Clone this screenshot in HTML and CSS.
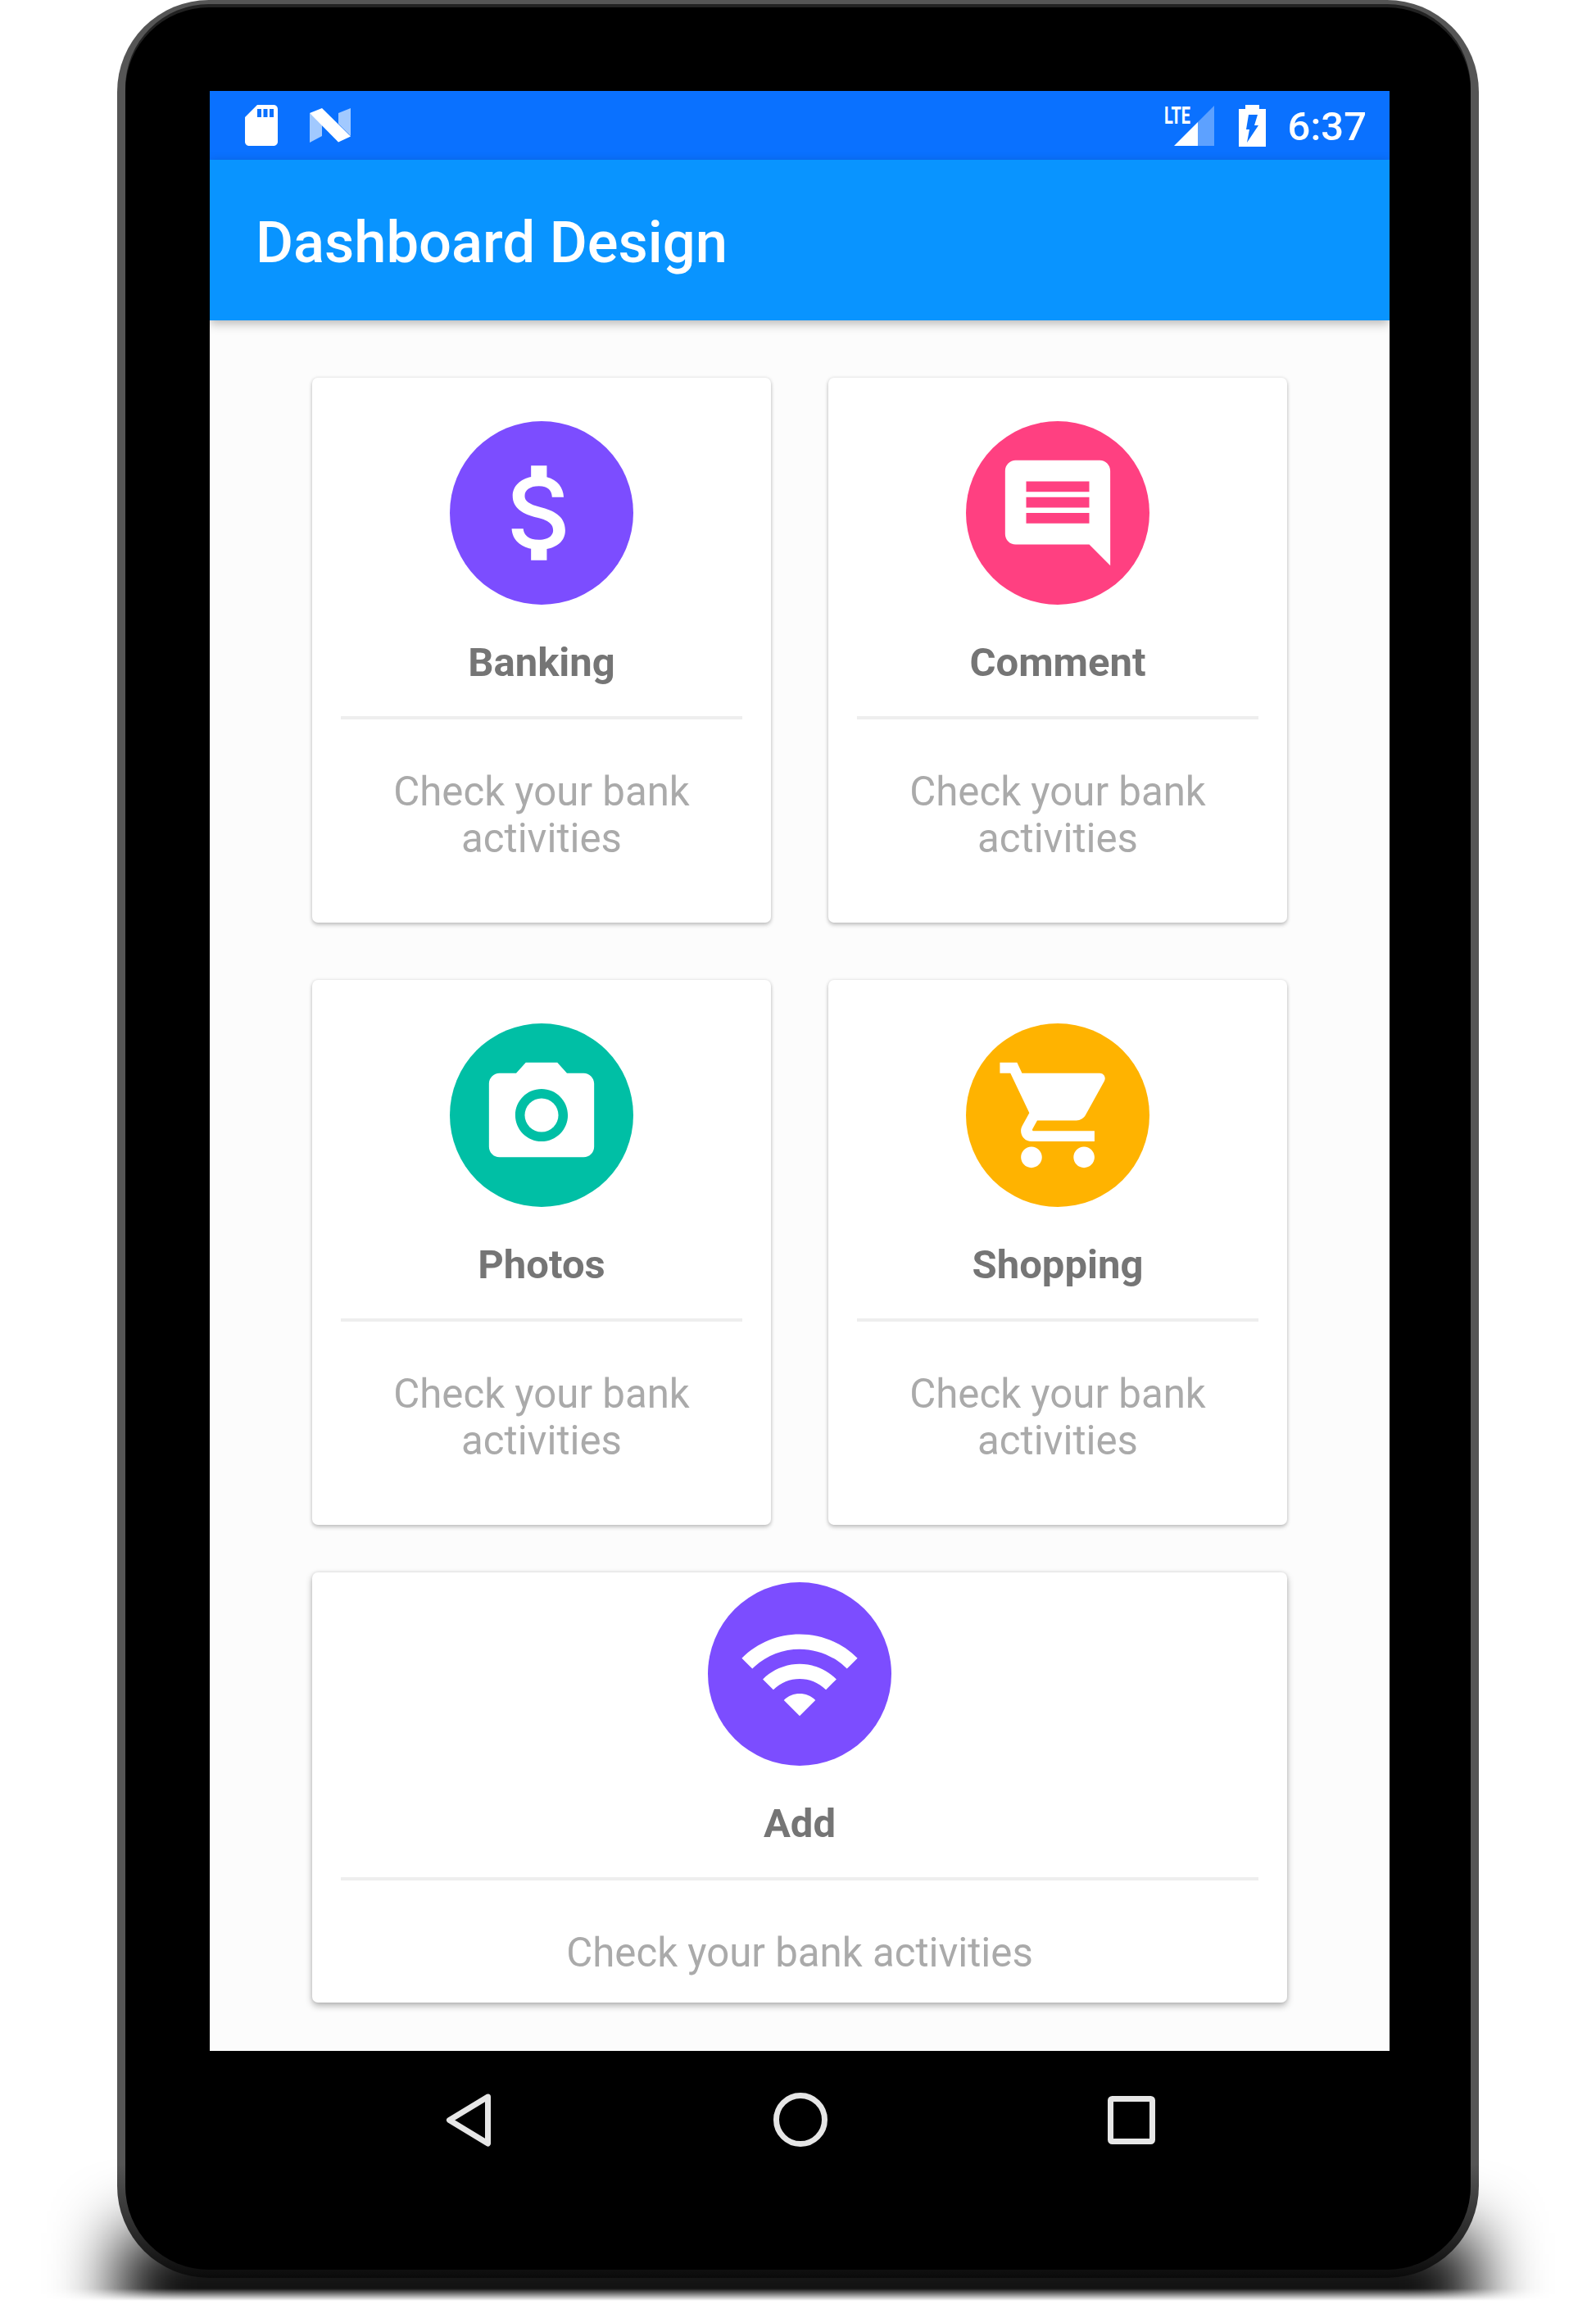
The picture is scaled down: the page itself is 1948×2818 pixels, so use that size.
FILE: index.html
```html
<!DOCTYPE html>
<html lang="en">
<head>
    <meta charset="UTF-8">
    <meta name="viewport" content="width=device-width, initial-scale=1.0">
    <title>Dashboard Design</title>
    <link rel="stylesheet" href="styles.css">
</head>
<body>
    <div class="device">
        <div class="bezel">
            <div class="screen">
                <!-- Status bar -->
                <div class="status-bar">
                    <svg class="sd-icon" viewBox="4 2 16 20"><path d="M18 2h-8L4.02 8 4 20c0 1.1.9 2 2 2h12c1.1 0 2-.9 2-2V4c0-1.1-.9-2-2-2zm-6 6h-2V4h2v4zm3 0h-2V4h2v4zm3 0h-2V4h2v4z"/></svg>
                    <svg class="n-icon" viewBox="0 0 50 42">
                        <polygon class="faded" points="0,6 15,18 15,34 0,42"/>
                        <polygon class="faded" points="35,6 50,0 50,34 35,19"/>
                        <polygon points="0,6 15,0 50,34.5 35,41.5"/>
                    </svg>
                    <svg class="signal-icon" viewBox="0 -8 61 57">
                        <text class="lte" x="0" y="22" textLength="32" lengthAdjust="spacingAndGlyphs">LTE</text>
                        <polygon points="12,49 41,49 41,20"/>
                        <polygon class="faded" points="41,20 61,0 61,49 41,49"/>
                    </svg>
                    <svg class="battery-icon" viewBox="0 0 33 51">
                        <polygon points="8,0 25,0 25,5 33,5 33,51 0,51 0,5 8,5"/>
                        <polygon class="bolt" points="12,12 23,12 19,25 24,25 10,46 13,30 9,30"/>
                    </svg>
                    <span class="time">6:37</span>
                </div>

                <div class="toolbar">
                    <h1>Dashboard Design</h1>
                </div>

                <!-- Dashboard cards -->
                <div class="content">
                    <div class="card">
                        <div class="circle purple">
                            <svg viewBox="0 0 24 24"><path d="M11.8 10.9c-2.27-.59-3-1.2-3-2.15 0-1.09 1.01-1.85 2.7-1.85 1.78 0 2.44.85 2.5 2.1h2.21c-.07-1.72-1.12-3.3-3.21-3.81V3h-3v2.16c-1.94.42-3.5 1.68-3.5 3.61 0 2.31 1.91 3.46 4.7 4.13 2.5.6 3 1.48 3 2.41 0 .69-.49 1.79-2.7 1.79-2.06 0-2.87-.92-2.98-2.1h-2.2c.12 2.19 1.76 3.42 3.68 3.83V21h3v-2.15c1.95-.37 3.5-1.5 3.5-3.55 0-2.84-2.43-3.81-4.7-4.4z"/></svg>
                        </div>
                        <h2>Banking</h2>
                        <div class="divider"></div>
                        <p>Check your bank activities</p>
                    </div>

                    <div class="card">
                        <div class="circle pink">
                            <svg viewBox="0 0 24 24"><path d="M21.99 4c0-1.1-.89-2-1.99-2H4c-1.1 0-2 .9-2 2v12c0 1.1.9 2 2 2h14l4 4-.01-18zM18 14H6v-2h12v2zm0-3H6V9h12v2zm0-3H6V6h12v2z"/></svg>
                        </div>
                        <h2>Comment</h2>
                        <div class="divider"></div>
                        <p>Check your bank activities</p>
                    </div>

                    <div class="card">
                        <div class="circle teal">
                            <svg viewBox="0 0 24 24"><circle cx="12" cy="12" r="3.2"/><path d="M9 2L7.17 4H4c-1.1 0-2 .9-2 2v12c0 1.1.9 2 2 2h16c1.1 0 2-.9 2-2V6c0-1.1-.9-2-2-2h-3.17L15 2H9zm3 15c-2.76 0-5-2.24-5-5s2.24-5 5-5 5 2.24 5 5-2.24 5-5 5z"/></svg>
                        </div>
                        <h2>Photos</h2>
                        <div class="divider"></div>
                        <p>Check your bank activities</p>
                    </div>

                    <div class="card">
                        <div class="circle amber">
                            <svg viewBox="0 0 24 24"><path d="M7 18c-1.1 0-1.99.9-1.99 2S5.9 22 7 22s2-.9 2-2-.9-2-2-2zM1 2v2h2l3.6 7.59-1.35 2.45c-.16.28-.25.61-.25.96 0 1.1.9 2 2 2h12v-2H7.42c-.14 0-.25-.11-.25-.25l.03-.12.9-1.63h7.45c.75 0 1.41-.41 1.75-1.03l3.58-6.49c.08-.14.12-.31.12-.48 0-.55-.45-1-1-1H5.21l-.94-2H1zm16 16c-1.1 0-1.99.9-1.99 2s.89 2 1.99 2 2-.9 2-2-.9-2-2-2z"/></svg>
                        </div>
                        <h2>Shopping</h2>
                        <div class="divider"></div>
                        <p>Check your bank activities</p>
                    </div>

                    <div class="card card-wide">
                        <div class="circle purple">
                            <svg viewBox="0 0 24 24"><path d="M1 9l2 2c4.97-4.97 13.03-4.97 18 0l2-2C16.93 2.93 7.08 2.93 1 9zm8 8l3 3 3-3c-1.65-1.66-4.34-1.66-6 0zm-4-4l2 2c2.76-2.76 7.24-2.76 10 0l2-2C15.14 9.14 8.87 9.14 5 13z"/></svg>
                        </div>
                        <h2>Add</h2>
                        <div class="divider"></div>
                        <p>Check your bank activities</p>
                    </div>
                </div>

                <!-- Navigation buttons -->
                <div class="nav-bar">
                    <svg class="nav-back" viewBox="0 0 56 65"><path d="M51.5 4 L4.5 32.5 L51.5 61 Z"/></svg>
                    <svg class="nav-home" viewBox="0 0 66 66"><circle cx="33" cy="33" r="29.5"/></svg>
                    <svg class="nav-recent" viewBox="0 0 58 59"><rect x="3.5" y="3.5" width="51" height="52" rx="2"/></svg>
                </div>
            </div>
        </div>
    </div>
</body>
</html>
```

FILE: styles.css
```css
* {
    box-sizing: border-box;
}
body {
    margin: 0;
    padding-left: 143px;
    height: 2818px;
    overflow: hidden;
    background-color: white;
    font-family: Roboto, sans-serif;
}
h1, h2, p {
    margin: 0;
}

/* Tablet frame */
.device {
    position: relative;
    width: 1662px;
    height: 2780px;
    padding: 9px 10px 10px;
    border-radius: 112px;
    background: linear-gradient(to bottom, #555 0, #555 95%, #2a2a2a 98%, #0a0a0a 100%);
}
/* Shadow under the tablet: a blurred block, cut off sharply below */
.device::before {
    content: "";
    position: absolute;
    z-index: -1;
    left: -143px;
    top: 2560px;
    width: 1948px;
    height: 300px;
    background: linear-gradient(black, black) no-repeat 145px 165px / 1658px 135px;
    filter: blur(40px);
    -webkit-mask-image: linear-gradient(to bottom, black 233px, transparent 248px);
    mask-image: linear-gradient(to bottom, black 233px, transparent 248px);
}
.bezel {
    height: 100%;
    padding: 102px 103px 0;
    border-radius: 102px;
    background-color: black;
    box-shadow: 0 -4px 0 #222;
}
.screen {
    display: flex;
    flex-direction: column;
    width: 1440px;
    height: 2560px;
    background-color: #fcfcfc;
}

/* Status bar */
.status-bar {
    display: flex;
    align-items: center;
    flex: none;
    height: 84px;
    padding: 0 28px 0 43px;
    background-color: #0a71ff;
    fill: white;
}
.status-bar .faded {
    opacity: 0.34;
}
.n-icon .faded {
    opacity: 0.62;
}
.sd-icon {
    width: 40px;
    height: 50px;
}
.n-icon {
    width: 50px;
    height: 42px;
    margin-left: 39px;
}
.signal-icon {
    width: 61px;
    height: 57px;
    margin-top: -8px;
    margin-left: auto;
}
.lte {
    font-family: Roboto, sans-serif;
    font-size: 29px;
    font-weight: 700;
}
.battery-icon {
    width: 33px;
    height: 51px;
    margin-left: 30px;
}
.bolt {
    fill: #0a71ff;
}
.time {
    margin-left: 27px;
    padding-top: 2px;
    color: white;
    font-size: 49px;
    font-weight: 500;
}

/* Toolbar */
.toolbar {
    position: relative;
    display: flex;
    align-items: center;
    flex: none;
    height: 196px;
    padding: 6px 0 0 56px;
    background-color: #0994ff;
    box-shadow: 0 4px 12px rgba(0, 0, 0, 0.28);
}
.toolbar h1 {
    color: white;
    font-size: 70.5px;
    font-weight: 500;
}

/* Cards */
.content {
    display: grid;
    grid-template-columns: 560px 560px;
    grid-template-rows: 665px 665px 513px;
    column-gap: 70px;
    row-gap: 70px;
    flex: 1;
    align-content: start;
    padding: 70px 125px 0;
}
.card {
    padding: 53px 35px 0;
    border-radius: 7px;
    background-color: white;
    box-shadow: 0 3px 5px rgba(0, 0, 0, 0.2), 0 0 4px rgba(0, 0, 0, 0.12);
    text-align: center;
}
.card-wide {
    grid-column: 1 / 3;
    margin-top: -12px;
    padding-top: 12px;
    box-shadow: 0 4px 8px rgba(0, 0, 0, 0.28), 0 0 4px rgba(0, 0, 0, 0.12);
}
.circle {
    display: flex;
    align-items: center;
    justify-content: center;
    width: 224px;
    height: 224px;
    margin: 0 auto;
    border-radius: 50%;
}
.circle svg {
    width: 154px;
    height: 154px;
    fill: white;
}
.purple {
    background-color: #7c4dff;
}
.pink {
    background-color: #ff4081;
}
.teal {
    background-color: #00bfa5;
}
.amber {
    background-color: #ffb300;
}
.card h2 {
    margin-top: 42px;
    color: #757575;
    font-size: 49px;
    font-weight: 700;
}
.divider {
    height: 4px;
    margin-top: 37px;
    background-color: #eeeeee;
}
.card p {
    margin: 60px 40px 0;
    color: #aaaaaa;
    font-size: 49.2px;
    line-height: 57px;
}

/* Navigation bar */
.nav-bar {
    display: flex;
    align-items: center;
    flex: none;
    height: 168px;
    padding-left: 288px;
    background-color: black;
    fill: none;
    stroke: #e6e6e6;
    stroke-width: 7px;
    stroke-linejoin: round;
}
.nav-back {
    width: 56px;
    height: 65px;
}
.nav-home {
    width: 66px;
    height: 66px;
    margin-left: 344px;
}
.nav-recent {
    width: 58px;
    height: 59px;
    margin-left: 342px;
}
```
